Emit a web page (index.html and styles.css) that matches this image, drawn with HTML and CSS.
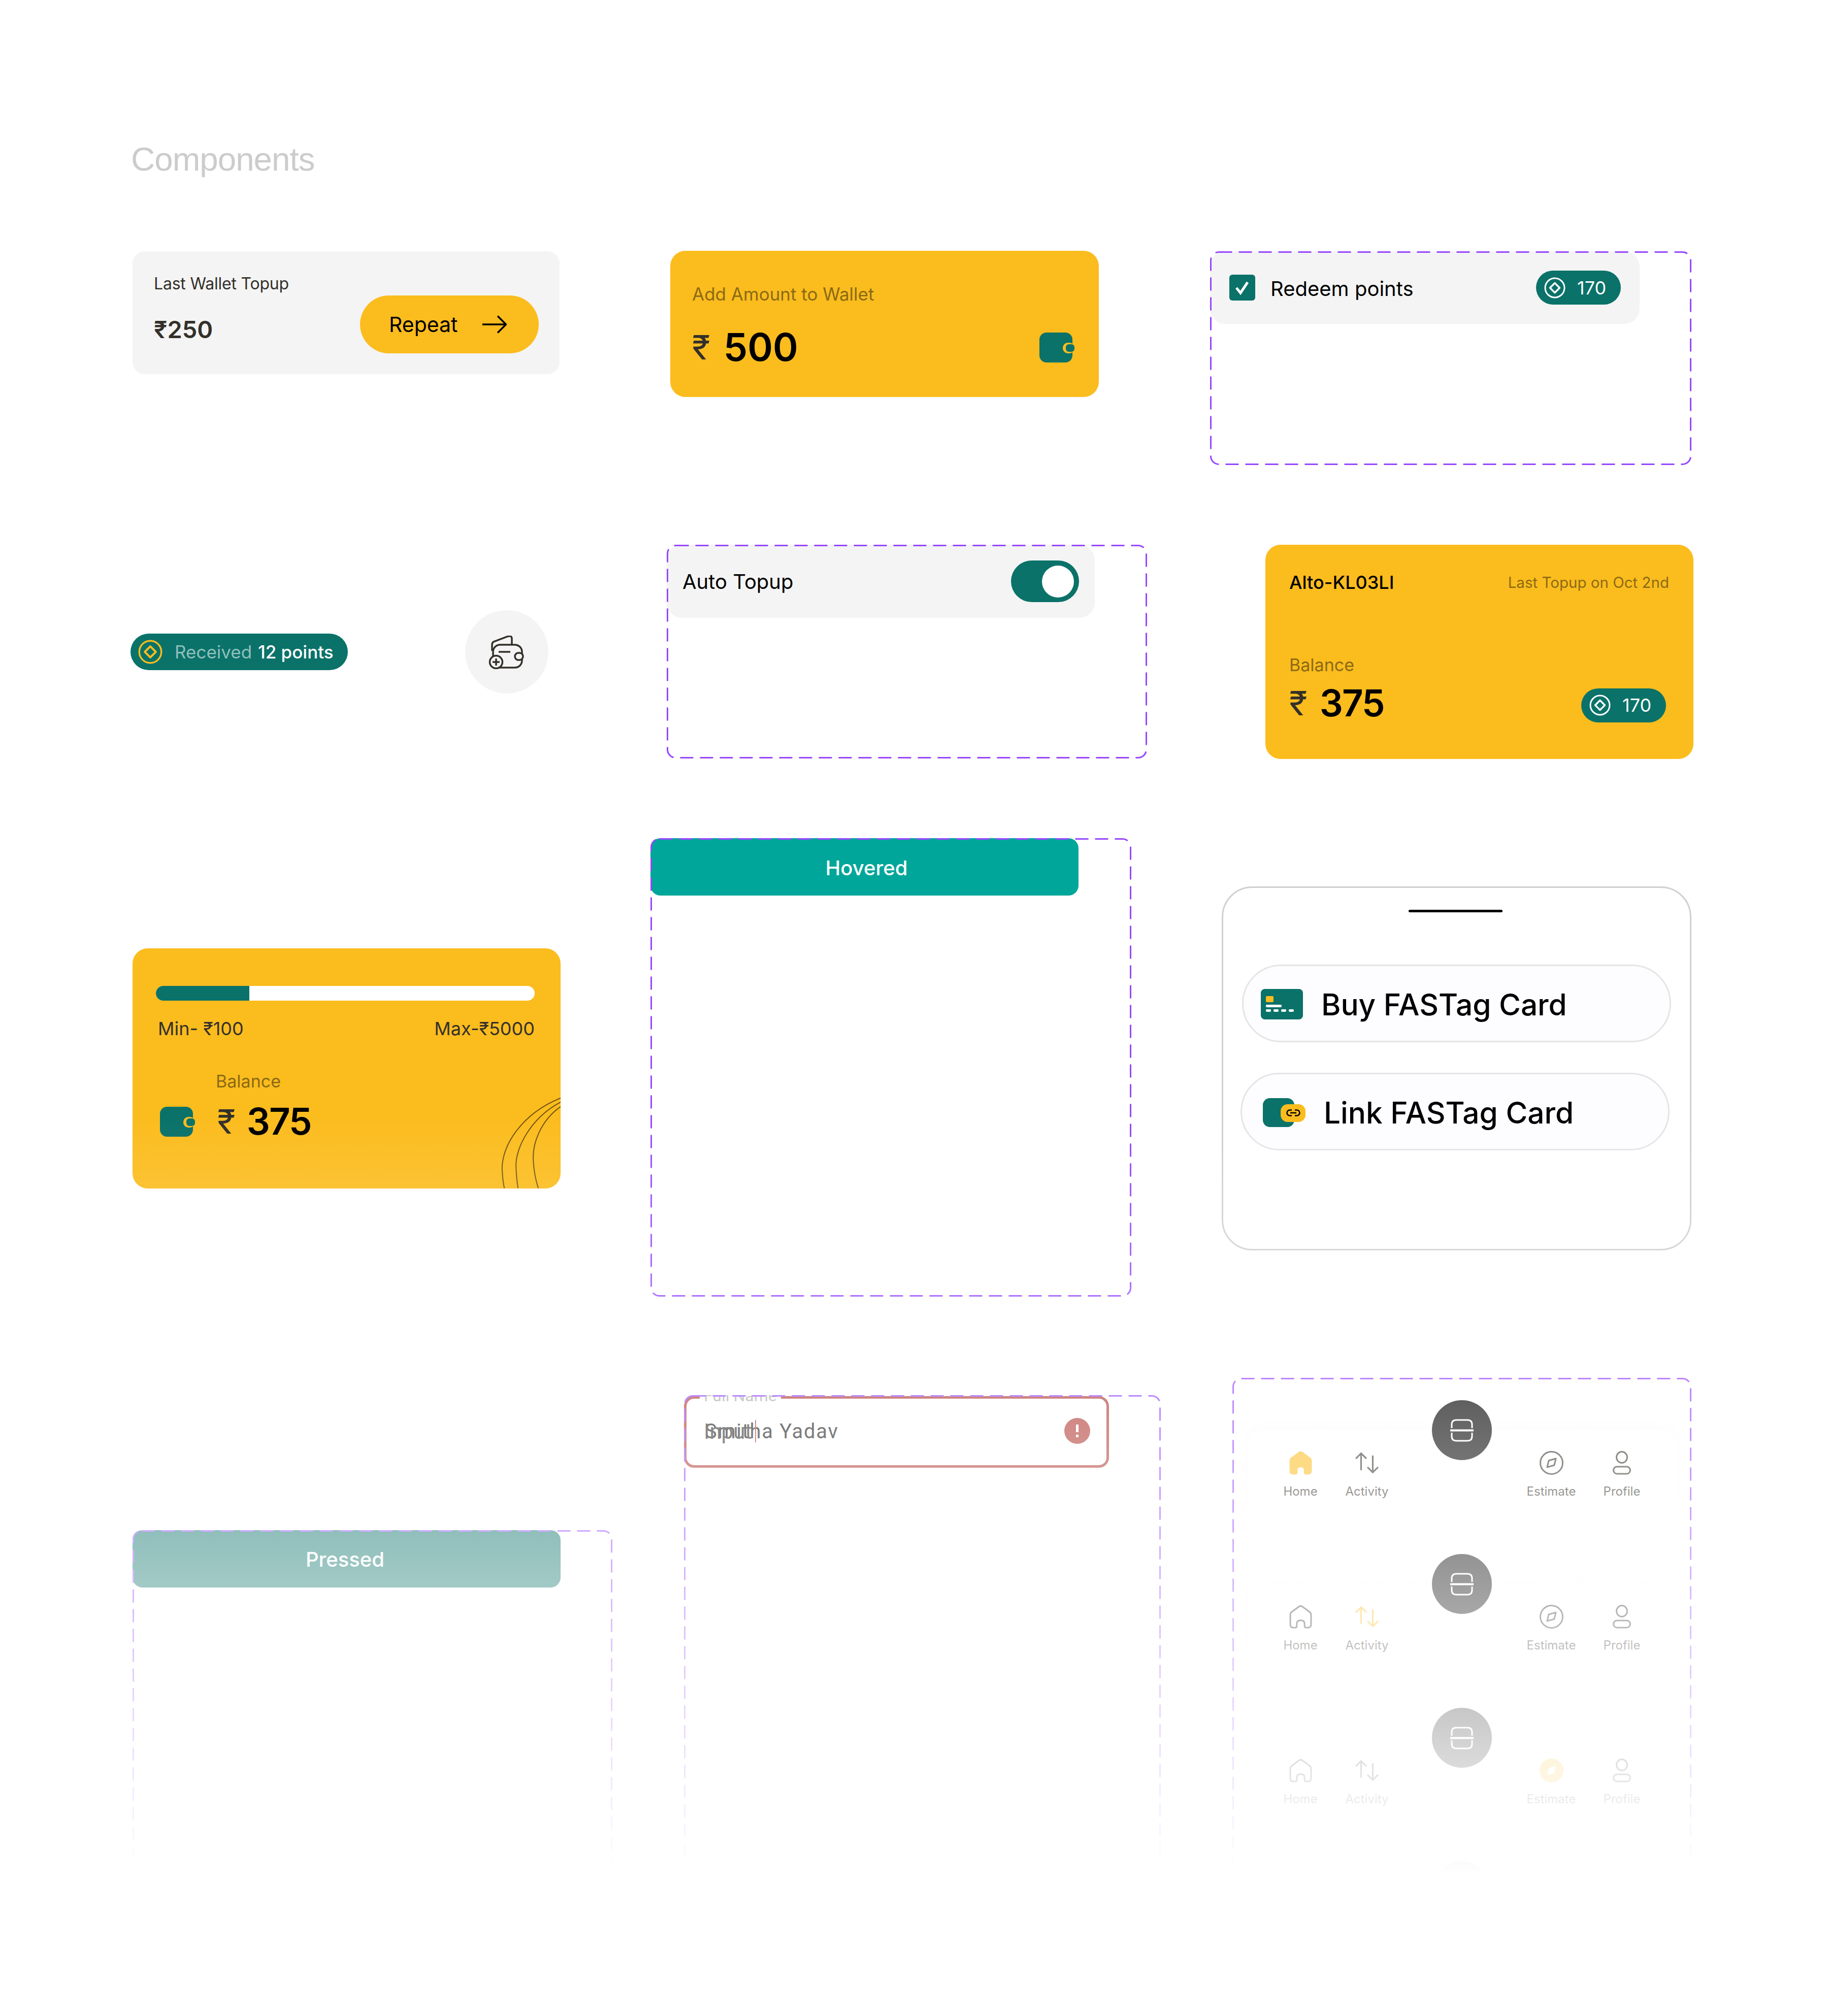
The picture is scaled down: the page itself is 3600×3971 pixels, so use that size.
FILE: index.html
```html
<!DOCTYPE html>
<html lang="en">
<head>
    <meta charset="UTF-8">
    <title>Components</title>
    <link rel="stylesheet" href="styles.css">
</head>
<body>
    <svg class="defs" aria-hidden="true">
        <symbol id="coin" viewBox="0 0 42 42">
            <circle cx="21" cy="21" r="19" fill="none" stroke="currentColor" stroke-width="3"/>
            <path d="M21 11.5 30.5 21 21 30.5 11.5 21Z" fill="none" stroke="currentColor" stroke-width="3.5" stroke-linejoin="round"/>
        </symbol>
        <symbol id="wallet" viewBox="0 0 69 59">
            <rect width="65" height="59" rx="14" fill="#0a7269"/>
            <rect x="46" y="20" width="23" height="21" rx="10" fill="#fbbc1e"/>
            <rect x="52" y="23" width="17" height="15" rx="6" fill="#0a7269"/>
        </symbol>
        <symbol id="scan" viewBox="0 0 46 45">
            <path d="M3 18V11Q3 2 12 2H34Q43 2 43 11V18M3 27V34Q3 43 12 43H34Q43 43 43 34V27" fill="none" stroke="#fff" stroke-width="3"/>
            <path d="M0 22.5H46" fill="none" stroke="#fff" stroke-width="4"/>
        </symbol>
        <symbol id="home" viewBox="0 0 45 46">
            <path d="M2.5 20Q2.5 16 5 14L20 3Q22.5 1.500 25 3L40 14Q42.500 16 42.500 20V38Q42.500 44 37 44H33Q30 44 30 41V36Q30 30 22.500 30Q15 30 15 36V41Q15 44 12 44H8Q2.500 44 2.500 38Z" stroke="currentColor" stroke-width="3"/>
        </symbol>
        <symbol id="activity" viewBox="0 0 45 40">
            <path d="M11 34V2M1 12 11 2 21 12M33 6V38M23 28 33 38 43 28" fill="none" stroke="currentColor" stroke-width="3"/>
        </symbol>
        <symbol id="compass" viewBox="0 0 47 47">
            <circle cx="23.500" cy="23.500" r="22" stroke="currentColor" stroke-width="3"/>
            <path d="M32 15 29 28 15 32 18 19Z" fill="none" stroke="currentColor" stroke-width="3" stroke-linejoin="round"/>
        </symbol>
        <symbol id="compass-on" viewBox="0 0 47 47">
            <circle cx="23.500" cy="23.500" r="23.500" fill="currentColor"/>
            <path d="M32 14 29 28 15 33 18 19Z" fill="#fff"/>
        </symbol>
        <symbol id="profile" viewBox="0 0 36 47">
            <ellipse cx="18" cy="12.500" rx="10.500" ry="11" fill="none" stroke="currentColor" stroke-width="3"/>
            <rect x="1.500" y="31" width="33" height="14" rx="7" fill="none" stroke="currentColor" stroke-width="3"/>
        </symbol>
    </svg>

    <div class="board">
        <h1 class="title">Components</h1>

        <!-- first row -->
        <div class="topup-card">
            <div class="topup-info">
                <span class="topup-label">Last Wallet Topup</span>
                <span class="topup-amount">₹250</span>
            </div>
            <button class="repeat-btn">
                Repeat
                <svg class="arrow" viewBox="0 0 48 36"><path d="M0 18H46M30 1.500 46.500 18 30 34.500" fill="none" stroke="#000" stroke-width="3.500"/></svg>
            </button>
        </div>

        <div class="add-card">
            <span class="add-label">Add Amount to Wallet</span>
            <div class="add-row">
                <span class="rupee">₹</span>
                <span class="big-num">500</span>
                <svg class="wallet-icon add-wallet"><use href="#wallet"/></svg>
            </div>
        </div>

        <div class="frame redeem-frame">
            <div class="redeem-panel">
                <span class="checkbox">
                    <svg viewBox="0 0 32 30"><path d="M4 15 12 25 26 4" fill="none" stroke="#fff" stroke-width="5"/></svg>
                </span>
                <span class="redeem-text">Redeem points</span>
                <span class="points-chip">
                    <svg class="coin"><use href="#coin"/></svg>
                    170
                </span>
            </div>
            <svg class="dash"><rect/></svg>
        </div>

        <!-- second row -->
        <div class="received-pill">
            <svg class="coin coin-yellow"><use href="#coin"/></svg>
            <span class="received-dim">Received</span>
            <span class="received-pts">12 points</span>
        </div>

        <div class="add-wallet-btn">
            <svg viewBox="0 0 70 66" fill="none" stroke="#33302a" stroke-width="3.500">
                <path d="M7 30V18Q7 14 10 12L37 1.800Q46 -1 46 6V19"/>
                <rect x="9" y="18" width="57" height="45" rx="14"/>
                <rect x="52" y="34" width="16" height="14" rx="7" fill="#f4f4f4"/>
                <path d="M20 32H43"/>
                <circle cx="15" cy="52" r="12.500" fill="#f4f4f4"/>
                <path d="M15 45V59M8 52H22"/>
            </svg>
        </div>

        <div class="frame auto-frame">
            <div class="auto-panel">
                <span class="auto-text">Auto Topup</span>
                <span class="toggle"><span class="knob"></span></span>
            </div>
            <svg class="dash"><rect/></svg>
        </div>

        <div class="alto-card">
            <div class="alto-top">
                <span class="alto-name">Alto-KL03LI</span>
                <span class="alto-last">Last Topup on Oct 2nd</span>
            </div>
            <span class="alto-balance">Balance</span>
            <div class="alto-row">
                <span class="rupee">₹</span>
                <span class="big-num num-tight">375</span>
                <span class="points-chip alto-chip">
                    <svg class="coin"><use href="#coin"/></svg>
                    170
                </span>
            </div>
        </div>

        <!-- third row -->
        <div class="balance-card">
            <div class="progress"><div class="progress-fill" style="width: 24.600%"></div></div>
            <div class="limits">
                <span>Min- ₹100</span>
                <span>Max-₹5000</span>
            </div>
            <span class="balance-label">Balance</span>
            <div class="balance-row">
                <svg class="wallet-icon"><use href="#wallet"/></svg>
                <span class="rupee">₹</span>
                <span class="big-num num-tight">375</span>
            </div>
            <svg class="arcs" viewBox="0 0 845 473" fill="none" stroke="#6e5310" stroke-width="2">
                <path d="M845 295C770 325 725 390 730 442Q731 460 734 473"/>
                <path d="M845 303C785 335 755 395 757 432Q758 455 761 473"/>
                <path d="M845 312C805 340 790 385 791 415Q792 445 801 473"/>
            </svg>
        </div>

        <div class="frame hovered-frame">
            <button class="wide-btn hovered-btn">Hovered</button>
            <svg class="dash"><rect/></svg>
        </div>

        <div class="sheet">
            <div class="handle"></div>
            <div class="sheet-item sheet-buy">
                <span class="card-icon">
                    <span class="card-chip"></span>
                    <span class="card-bar"></span>
                    <span class="card-dots"><i></i><i></i><i></i><i></i></span>
                </span>
                Buy FASTag Card
            </div>
            <div class="sheet-item sheet-link">
                <span class="link-icon">
                    <span class="link-badge">
                        <svg viewBox="0 0 28 14"><path d="M11 1.500H7A5.500 5.500 0 0 0 7 12.500H11M17 1.500H21A5.500 5.500 0 0 1 21 12.500H17M8 7H20" fill="none" stroke="#000" stroke-width="2.600"/></svg>
                    </span>
                </span>
                Link FASTag Card
            </div>
        </div>

        <!-- fourth row -->
        <div class="frame pressed-frame">
            <button class="wide-btn pressed-btn">Pressed</button>
            <svg class="dash"><rect/></svg>
        </div>

        <div class="frame input-frame">
            <div class="input-field">
                <span class="input-label">Full Name</span>
                <span class="input-value">Smitha Yadav</span>
                <span class="input-ghost">Input</span>
                <span class="caret"></span>
                <span class="input-error"><i></i><b></b></span>
            </div>
            <svg class="dash"><rect/></svg>
        </div>

        <div class="frame nav-frame">
            <div class="nav-row">
                <div class="nav-group">
                    <div class="nav-item nav-on"><svg class="nav-icon icon-fill"><use href="#home"/></svg>Home</div>
                    <div class="nav-item"><svg class="nav-icon"><use href="#activity"/></svg>Activity</div>
                </div>
                <div class="scan-btn"><svg><use href="#scan"/></svg></div>
                <div class="nav-group nav-group-right">
                    <div class="nav-item"><svg class="nav-icon"><use href="#compass"/></svg>Estimate</div>
                    <div class="nav-item"><svg class="nav-icon nav-icon-small"><use href="#profile"/></svg>Profile</div>
                </div>
            </div>
            <div class="nav-row">
                <div class="nav-group">
                    <div class="nav-item"><svg class="nav-icon"><use href="#home"/></svg>Home</div>
                    <div class="nav-item nav-on"><svg class="nav-icon"><use href="#activity"/></svg>Activity</div>
                </div>
                <div class="scan-btn"><svg><use href="#scan"/></svg></div>
                <div class="nav-group nav-group-right">
                    <div class="nav-item"><svg class="nav-icon"><use href="#compass"/></svg>Estimate</div>
                    <div class="nav-item"><svg class="nav-icon nav-icon-small"><use href="#profile"/></svg>Profile</div>
                </div>
            </div>
            <div class="nav-row">
                <div class="nav-group">
                    <div class="nav-item"><svg class="nav-icon"><use href="#home"/></svg>Home</div>
                    <div class="nav-item"><svg class="nav-icon"><use href="#activity"/></svg>Activity</div>
                </div>
                <div class="scan-btn"><svg><use href="#scan"/></svg></div>
                <div class="nav-group nav-group-right">
                    <div class="nav-item nav-on"><svg class="nav-icon"><use href="#compass-on"/></svg>Estimate</div>
                    <div class="nav-item"><svg class="nav-icon nav-icon-small"><use href="#profile"/></svg>Profile</div>
                </div>
            </div>
            <div class="nav-row">
                <div class="scan-btn"><svg><use href="#scan"/></svg></div>
            </div>
            <svg class="dash"><rect/></svg>
        </div>

        <div class="fade"></div>
    </div>
</body>
</html>
```

FILE: styles.css
```css
* {
    box-sizing: border-box;
}

body {
    margin: 0;
    background: #fff;
    font-family: "Inter", "Noto Sans", sans-serif;
    color: #33302a;
}

button {
    font-family: inherit;
    border: none;
    padding: 0;
}

.defs {
    position: absolute;
    width: 0;
    height: 0;
}

/* the whole page is a free canvas, each component sits at its own spot */
.board {
    position: relative;
    width: 3600px;
    height: 3971px;
    overflow: hidden;
}

.board > * {
    position: absolute;
}

.title {
    left: 258px;
    top: 272px;
    margin: 0;
    font-size: 65.5px;
    line-height: 84px;
    font-weight: 400;
    font-family: "Liberation Sans", sans-serif;
    letter-spacing: -1px;
    color: #cccccc;
}

/* dashed figma frames */
.frame {
    border-radius: 16px;
}

.dash {
    position: absolute;
    inset: 0;
    width: 100%;
    height: 100%;
    pointer-events: none;
}

.dash rect {
    x: 1.5px;
    y: 1.5px;
    width: calc(100% - 3px);
    height: calc(100% - 3px);
    rx: 16px;
    fill: none;
    stroke: #9747ff;
    stroke-width: 3;
    stroke-dasharray: 26 13;
}

/* shared bits */
.rupee {
    font-size: 66px;
    line-height: 80px;
    font-weight: 400;
    color: #33302a;
}

.big-num {
    font-size: 75.5px;
    line-height: 80px;
    font-weight: 600;
    color: #000;
}

.num-tight {
    font-size: 72.5px;
    letter-spacing: -2px;
}

.wallet-icon {
    width: 69px;
    height: 59px;
}

.coin {
    width: 42px;
    height: 42px;
    color: #fff;
}

.coin-yellow {
    width: 48px;
    height: 48px;
    color: #fbbc1e;
}

.points-chip {
    display: flex;
    align-items: center;
    gap: 23px;
    width: 167px;
    height: 67px;
    padding-left: 16px;
    border-radius: 34px;
    background: #0a7269;
    color: #fff;
    font-size: 36px;
}

/* last wallet topup */
.topup-card {
    left: 261px;
    top: 495px;
    width: 841px;
    height: 242px;
    padding: 0 41px 41px 42px;
    display: flex;
    justify-content: space-between;
    align-items: flex-end;
    border-radius: 24px;
    background: #f4f4f4;
}

.topup-info {
    display: flex;
    flex-direction: column;
    gap: 40px;
    padding-bottom: 17px;
}

.topup-label {
    font-size: 32px;
    line-height: 40px;
    letter-spacing: -0.2px;
}

.topup-amount {
    font-size: 47px;
    line-height: 60px;
    font-weight: 600;
}

.repeat-btn {
    display: flex;
    align-items: center;
    gap: 48px;
    width: 352px;
    height: 114px;
    padding-left: 57px;
    border-radius: 57px;
    background: #fbbc1e;
    color: #000;
    font-size: 41px;
}

.arrow {
    width: 48px;
    height: 36px;
}

/* add amount */
.add-card {
    left: 1320px;
    top: 494px;
    width: 844px;
    height: 288px;
    padding: 60px 48px 0 43px;
    border-radius: 30px;
    background: #fbbc1e;
}

.add-label {
    display: block;
    font-size: 35px;
    line-height: 50px;
    color: #8a6a14;
}

.add-row {
    display: flex;
    align-items: center;
    gap: 26px;
    margin-top: 40px;
}

.add-wallet {
    margin-left: auto;
}

/* redeem points */
.redeem-frame {
    left: 2383px;
    top: 495px;
    width: 948px;
    height: 421px;
}

.redeem-panel {
    width: 846px;
    height: 143px;
    padding: 0 37px 0 38px;
    display: flex;
    align-items: center;
    border-radius: 30px;
    background: #f4f4f4;
}

.checkbox {
    display: flex;
    align-items: center;
    justify-content: center;
    width: 51px;
    height: 51px;
    border-radius: 6px;
    background: #0a7269;
}

.checkbox svg {
    width: 32px;
    height: 30px;
}

.redeem-text {
    margin-left: 30px;
    padding-top: 4px;
    font-size: 40px;
    color: #000;
}

.redeem-panel .points-chip {
    margin-left: auto;
}

/* received */
.received-pill {
    left: 257px;
    top: 1248px;
    width: 428px;
    height: 72px;
    padding-left: 15px;
    display: flex;
    align-items: center;
    border-radius: 36px;
    background: #0a7269;
    font-size: 35px;
    color: #fff;
}

.received-dim {
    margin-left: 24px;
    color: #8fbfbb;
}

.received-pts {
    margin-left: 12px;
    font-weight: 500;
}

.add-wallet-btn {
    left: 916px;
    top: 1202px;
    width: 164px;
    height: 164px;
    padding: 50px 0 0 46px;
    border-radius: 50%;
    background: #f4f4f4;
}

.add-wallet-btn svg {
    display: block;
    width: 70px;
    height: 66px;
}

/* auto topup */
.auto-frame {
    left: 1313px;
    top: 1073px;
    width: 946px;
    height: 421px;
}

.auto-panel {
    width: 843px;
    height: 144px;
    padding: 0 31px;
    display: flex;
    justify-content: space-between;
    align-items: center;
    border-radius: 30px;
    background: #f4f4f4;
}

.auto-text {
    font-size: 40px;
    color: #000;
}

.toggle {
    display: flex;
    justify-content: flex-end;
    align-items: center;
    width: 134px;
    height: 82px;
    padding-right: 10px;
    border-radius: 41px;
    background: #0a7269;
}

.knob {
    width: 63px;
    height: 63px;
    border-radius: 50%;
    background: #fff;
}

/* alto card */
.alto-card {
    left: 2492px;
    top: 1073px;
    width: 843px;
    height: 422px;
    padding: 52px 48px 0 47px;
    border-radius: 30px;
    background: #fbbc1e;
}

.alto-top {
    display: flex;
    justify-content: space-between;
    align-items: center;
}

.alto-name {
    font-size: 36px;
    font-weight: 500;
    color: #000;
}

.alto-last {
    font-size: 29.5px;
    color: #8a6a14;
}

.alto-balance {
    display: block;
    margin-top: 116px;
    font-size: 34px;
    line-height: 50px;
    color: #8a6a14;
}

.alto-row {
    display: flex;
    align-items: center;
    gap: 24px;
    margin-top: 10px;
}

.alto-chip {
    margin-left: auto;
    margin-top: 8px;
    margin-right: 6px;
}

/* balance card */
.balance-card {
    left: 261px;
    top: 1868px;
    width: 843px;
    height: 473px;
    padding: 74px 51px 0 46px;
    border-radius: 30px;
    background: #fbbc1e;
    overflow: hidden;
}

.progress {
    height: 29px;
    border-radius: 15px;
    background: #fff;
    overflow: hidden;
}

.progress-fill {
    height: 100%;
    background: #0a7269;
}

.limits {
    display: flex;
    justify-content: space-between;
    margin-top: 30px;
    padding-left: 4px;
    font-size: 36px;
    line-height: 50px;
}

.balance-label {
    display: block;
    margin: 54px 0 0 118px;
    font-size: 34px;
    line-height: 50px;
    color: #8a6a14;
}

.balance-row {
    display: flex;
    align-items: center;
    gap: 22px;
    margin: 14px 0 0 8px;
}

.balance-row .wallet-icon {
    margin-right: 22px;
}

.arcs {
    position: absolute;
    inset: 0;
    width: 100%;
    height: 100%;
}

/* wide buttons */
.wide-btn {
    display: block;
    width: 843px;
    height: 113px;
    border-radius: 20px;
    background: #00a69a;
    color: #fff;
    font-size: 40px;
    font-weight: 500;
}

.hovered-btn {
    padding: 3px 0 0 8px;
}

.pressed-btn {
    padding: 2px 6px 0 0;
    background: #0a7269;
}

.hovered-frame {
    left: 1281px;
    top: 1651px;
    width: 947px;
    height: 903px;
}

.pressed-frame {
    left: 261px;
    top: 3014px;
    width: 945px;
    height: 1100px;
}

/* bottom sheet */
.sheet {
    left: 2406px;
    top: 1746px;
    width: 925px;
    height: 717px;
    padding-top: 43px;
    border: 3px solid #d0d0d0;
    border-radius: 60px;
    background: #fff;
}

.handle {
    width: 185px;
    height: 5px;
    margin-left: 365px;
    border-radius: 3px;
    background: #000;
}

.sheet-item {
    position: relative;
    display: flex;
    align-items: center;
    width: 845px;
    height: 153px;
    border: 3px solid #e5e5e5;
    border-radius: 77px;
    background: #fdfcff;
    font-size: 58.5px;
    font-weight: 500;
    color: #000;
}

.sheet-buy {
    margin: 103px 0 0 37px;
    padding: 3px 0 0 34px;
    gap: 36px;
}

.sheet-link {
    margin: 60px 0 0 34px;
    padding: 3px 0 0 41px;
    gap: 58px;
}

.card-icon {
    display: flex;
    flex-direction: column;
    width: 83px;
    height: 60px;
    padding: 14px 10px 0;
    border-radius: 8px;
    background: #0a7269;
}

.card-chip {
    width: 15px;
    height: 12px;
    border-radius: 2px;
    background: #fbbc1e;
}

.card-bar {
    width: 31px;
    height: 5px;
    margin-top: 5px;
    border-radius: 2px;
    background: #fff;
}

.card-dots {
    display: flex;
    gap: 5px;
    margin-top: 4px;
}

.card-dots i {
    width: 10px;
    height: 5px;
    border-radius: 2px;
    background: #fff;
}

.link-icon {
    position: relative;
    width: 62px;
    height: 57px;
    border-radius: 14px;
    background: #0a7269;
}

.link-badge {
    position: absolute;
    left: 35px;
    top: 12px;
    display: flex;
    align-items: center;
    justify-content: center;
    width: 49px;
    height: 35px;
    border-radius: 14px;
    background: #fbbc1e;
}

.link-badge svg {
    width: 28px;
    height: 14px;
}

/* error input */
.input-frame {
    left: 1347px;
    top: 2748px;
    width: 939px;
    height: 1100px;
    overflow: hidden;
}

.input-field {
    position: relative;
    display: flex;
    align-items: center;
    width: 837px;
    height: 141px;
    margin-top: 2px;
    padding: 0 0 3px 36px;
    border: 5px solid #b33c36;
    border-radius: 20px;
    background: #fff;
    font-family: "Roboto", sans-serif;
    font-size: 40px;
    letter-spacing: 1.7px;
    color: #1c1c1c;
}

.input-label {
    position: absolute;
    left: 26px;
    top: -20px;
    height: 36px;
    padding: 0 8px;
    background: #fff;
    font-size: 32px;
    line-height: 28px;
    letter-spacing: 0;
    color: #aaa;
}

.input-ghost {
    position: absolute;
    left: 34px;
    top: 50%;
    transform: translateY(-50%);
    margin-top: -2px;
    letter-spacing: 0;
    font-size: 42px;
    color: #333;
}

.caret {
    position: absolute;
    left: 135px;
    top: 42px;
    width: 2px;
    height: 44px;
    background: #b33c36;
}

.input-error {
    position: absolute;
    right: 32px;
    top: 38px;
    width: 51px;
    height: 51px;
    border-radius: 50%;
    background: #b33c36;
}

.input-error i,
.input-error b {
    position: absolute;
    left: 23px;
    width: 5px;
    background: #fff;
}

.input-error i {
    top: 13px;
    height: 15px;
}

.input-error b {
    top: 33px;
    height: 5px;
}

/* bottom nav states */
.nav-frame {
    left: 2427px;
    top: 2714px;
    width: 904px;
    height: 1300px;
}

.nav-row {
    position: relative;
    display: flex;
    justify-content: space-between;
    height: 303px;
    padding: 144px 72px 0 69px;
}

.nav-row::before {
    content: "";
    position: absolute;
    left: 30px;
    right: 30px;
    top: 102px;
    height: 170px;
    border-radius: 30px;
    box-shadow: 0 -6px 24px rgba(0, 0, 0, 0.02);
}

.nav-group {
    position: relative;
    display: flex;
    gap: 1px;
}

.nav-group-right {
    gap: 9px;
}

.nav-item {
    display: flex;
    flex-direction: column;
    align-items: center;
    width: 130px;
    font-size: 24px;
    line-height: 30px;
    letter-spacing: 0;
    color: #33302a;
}

.nav-icon {
    width: 47px;
    height: 47px;
    margin-bottom: 18px;
    fill: none;
    color: #33302a;
}

.nav-icon-small {
    width: 36px;
}

.nav-on .nav-icon {
    color: #fbbc1e;
}

.icon-fill {
    fill: #fbbc1e;
}

.scan-btn {
    position: absolute;
    left: 393px;
    top: 44px;
    display: flex;
    align-items: center;
    justify-content: center;
    width: 118px;
    height: 118px;
    border-radius: 50%;
    background: #000;
}

.scan-btn svg {
    width: 46px;
    height: 45px;
}

/* everything fades to white towards the bottom of the board */
.fade {
    left: 0;
    top: 2200px;
    width: 3600px;
    height: 1771px;
    background: linear-gradient(rgba(255, 255, 255, 0) 0, #fff 1490px);
    pointer-events: none;
}
```
